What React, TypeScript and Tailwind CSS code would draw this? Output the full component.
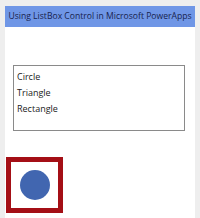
export default function App() {
  return (
    <div className="w-[200px] h-[218px] bg-[#eeeeee] pt-[6px] pl-[5px] pr-[5px] flex flex-col overflow-hidden" style={{ fontFamily: '"Open Sans", sans-serif' }}>
      <div className="flex-1 bg-white flex flex-col">
        <div className="h-[21px] bg-[#6f96e6] flex items-center justify-center text-[8.6px] text-[#17224d] whitespace-nowrap">
          Using ListBox Control in Microsoft PowerApps
        </div>
        <div className="pt-[38px] pl-[8px] pr-[10px]">
          <div className="h-[66px] border border-[#8a8a8a] pl-[3px] pt-[3px] flex flex-col text-[9px] text-[#222] leading-[16px]">
            <span>Circle</span>
            <span>Triangle</span>
            <span>Rectangle</span>
          </div>
        </div>
        <div className="pt-[26px] pl-[1px]">
          <div className="w-[57px] h-[56px] border-[5px] border-[#a40f16] flex items-center justify-center">
            <div className="w-[30px] h-[30px] rounded-full bg-[#4166b0]" />
          </div>
        </div>
      </div>
    </div>
  );
}
